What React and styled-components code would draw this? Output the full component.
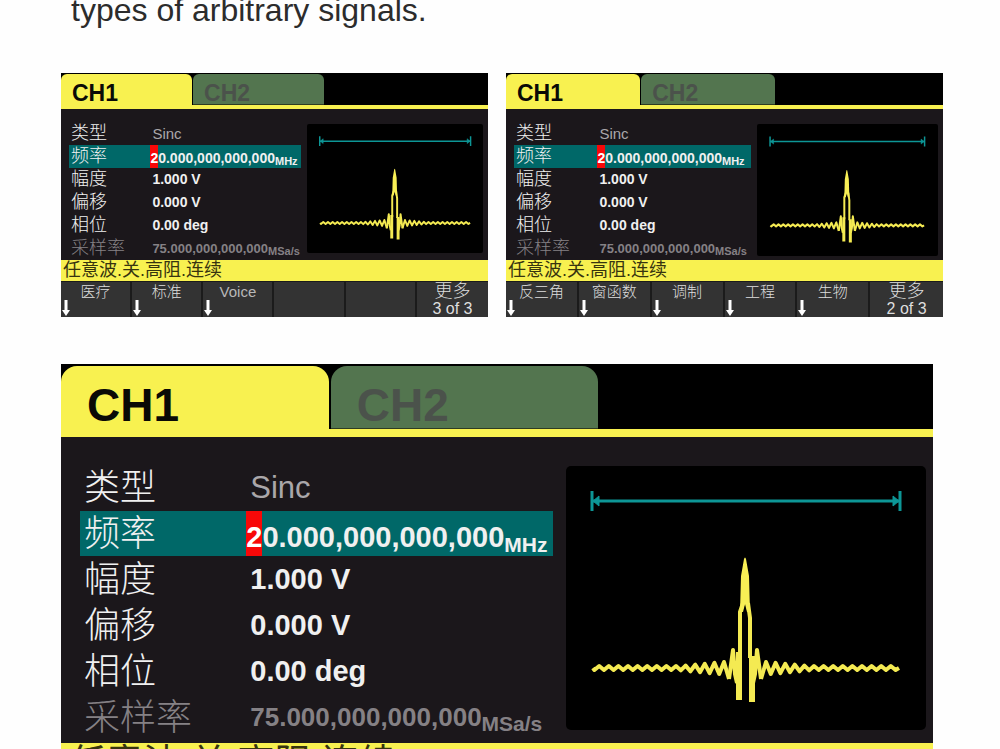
import React from "react";
import styled, { createGlobalStyle, ThemeProvider } from "styled-components";

const GlobalStyle = createGlobalStyle`
  * { box-sizing: border-box; }
  body {
    margin: 0;
    background: #fefefe;
    font-family: "Liberation Sans", "Noto Sans CJK SC", sans-serif;
  }
  button { font-family: inherit; }
`;

const small = {
  tabHeight: 31, tabRadius: 6, tabPad: 11, tabFont: 23, tabDrop: 8, tabTop: 1, line: 4, tabGap: 1,
  bodyTop: 13, bodySide: 8, bodyEnd: 5, bodyGap: 6, plotTop: 2, plotRadius: 2,
  row: 23, rowGap: 0, rowPad: 2, label: 18, text: 15, value: 14, rate: 13, unit: 11,
  unitDrop: 2, cursor: 2, drop: 2, bodyBottom: 0,
  status: 21, statusPad: 2, statusFont: 18, soft: 36, softFont: 15, more: 18, count: 16, arrow: 8,
};

const large = {
  tabHeight: 63, tabRadius: 16, tabPad: 26, tabFont: 46, tabDrop: 15, tabTop: 2, line: 8, tabGap: 2,
  bodyTop: 28, bodySide: 19, bodyEnd: 7, bodyGap: 13, plotTop: 1, plotRadius: 5,
  row: 45, rowGap: 1, rowPad: 4, label: 36, text: 31, value: 29, rate: 26, unit: 21,
  unitDrop: 5, cursor: 4, drop: 4, bodyBottom: 3,
  status: 42, statusPad: 8, statusFont: 37, soft: 72, softFont: 30, more: 36, count: 32, arrow: 16,
};

const Page = styled.main`
  height: 100vh;
  overflow: hidden;
  padding: 0 57px 0 61px;
`;

const Lead = styled.p`
  margin: -8px 0 45px;
  padding-left: 10px;
  font-size: 32px;
  line-height: 36px;
  color: #2c2c2c;
`;

const Pair = styled.section`
  display: grid;
  grid-template-columns: minmax(0, 427fr) minmax(0, 437fr);
  gap: 18px;
  margin-bottom: 47px;
`;

const Single = styled.section`
  padding-right: 10px;
`;

const Frame = styled.article`
  display: flex;
  flex-direction: column;
  background: #1b171b;
  color: #f2f2f2;
  overflow: hidden;
`;

const Tabs = styled.nav`
  display: flex;
  gap: ${(p) => p.theme.tabGap}px;
  padding-top: ${(p) => p.theme.tabTop}px;
  background: #000;
  border-bottom: ${(p) => p.theme.line}px solid #f8f150;
`;

const Tab = styled.button`
  flex: 0 0 30.7%;
  height: ${(p) => p.theme.tabHeight}px;
  padding: ${(p) => p.theme.tabDrop}px 0 0 ${(p) => p.theme.tabPad}px;
  border: 0;
  border-bottom: 1px solid ${(p) => (p.$active ? "#f8f150" : "#2e3c22")};
  border-radius: ${(p) => p.theme.tabRadius}px ${(p) => p.theme.tabRadius}px 0 0;
  background: ${(p) => (p.$active ? "#f8f150" : "#53754f")};
  color: ${(p) => (p.$active ? "#0a0a06" : "#4b524b")};
  font-size: ${(p) => p.theme.tabFont}px;
  font-weight: 700;
  line-height: 1;
  text-align: left;
`;

const Body = styled.div`
  display: grid;
  grid-template-columns: minmax(0, 473fr) minmax(0, 360fr);
  gap: ${(p) => p.theme.bodyGap}px;
  align-items: start;
  padding: ${(p) => p.theme.bodyTop}px ${(p) => p.theme.bodyEnd}px ${(p) => p.theme.bodyBottom}px
    ${(p) => p.theme.bodySide}px;
`;

const Params = styled.dl`
  display: grid;
  gap: ${(p) => p.theme.rowGap}px;
  margin: 0;
`;

const Row = styled.div`
  display: grid;
  grid-template-columns: 36% minmax(0, 1fr);
  height: ${(p) => p.theme.row}px;
  background: ${(p) => (p.$selected ? "#006868" : "transparent")};
  color: ${(p) => (p.$dim ? "#858185" : "#f0f0f0")};
  white-space: nowrap;
`;

const Name = styled.dt`
  padding-left: ${(p) => p.theme.rowPad}px;
  font-size: ${(p) => p.theme.label}px;
  font-weight: 300;
  line-height: ${(p) => p.theme.row}px;
`;

const Value = styled.dd`
  height: ${(p) => p.theme.row}px;
  margin: 0;
  font-size: ${(p) => p.theme.value}px;
  font-weight: 700;
  line-height: ${(p) => p.theme.row}px;
`;

const EditValue = styled(Value)`
  display: flex;
  margin-left: -${(p) => p.theme.cursor}px;
`;

const RateValue = styled(Value)`
  font-size: ${(p) => p.theme.rate}px;
`;

const PlainValue = styled(Value)`
  font-size: ${(p) => p.theme.text}px;
  font-weight: 400;
  color: #aaa7aa;
`;

const Cursor = styled.mark`
  height: 100%;
  padding-top: ${(p) => p.theme.drop}px;
  background: #f80808;
  color: #fff;
`;

const Digits = styled.span`
  padding-top: ${(p) => p.theme.drop}px;
`;

const Unit = styled.small`
  position: relative;
  top: ${(p) => p.theme.unitDrop}px;
  font-size: ${(p) => p.theme.unit}px;
  line-height: 0;
`;

const Plot = styled.svg`
  display: block;
  width: 100%;
  height: auto;
  margin-top: ${(p) => p.theme.plotTop}px;
  border-radius: ${(p) => p.theme.plotRadius}px;
  background: #000;
`;

const Status = styled.p`
  margin: 0;
  padding-left: ${(p) => p.theme.statusPad}px;
  background: #f8f150;
  color: #37340f;
  font-size: ${(p) => p.theme.statusFont}px;
  line-height: ${(p) => p.theme.status}px;
  white-space: nowrap;
`;

const SoftKeys = styled.div`
  display: grid;
  grid-template-columns: repeat(6, minmax(0, 1fr));
  height: ${(p) => p.theme.soft}px;
  border-bottom: 1px solid #111;
`;

const SoftKey = styled.button`
  display: grid;
  grid-template-rows: 1fr 1fr;
  justify-items: center;
  align-items: center;
  padding: 0;
  border: 0;
  border-top: 1px solid #1b1b1b;
  border-right: 2px solid #1b1b1b;
  background: #333;
  color: #dedede;
  font-size: ${(p) => (p.$more ? p.theme.more : p.theme.softFont)}px;
  font-weight: 300;
  line-height: 1;
  white-space: nowrap;
  &:last-child { border-right: 0; }
`;

const Count = styled.span`
  font-size: ${(p) => p.theme.count}px;
`;

const KeyText = styled.span`
  grid-area: 1 / 1;
`;

const Latin = styled(KeyText)`
  color: #b8b8b8;
`;

const Arrow = styled.svg`
  grid-area: 1 / 1 / 3 / 2;
  justify-self: start;
  align-self: end;
  width: ${(p) => p.theme.arrow}px;
  margin: 0 0 2px 1px;
`;

function ripple(from, step, count) {
  const points = [];
  for (let i = 0; i < count; i += 1) {
    const x = from + step * i;
    const amp = Math.max(2, 6 - i * 0.9);
    points.push(`L${x} ${202 - amp}`, `L${x + step / 2} ${202 + amp}`);
  }
  return points.join(" ");
}

function Waveform() {
  return (
    <Plot viewBox="0 0 360 264" role="img" aria-label="Sinc">
      <g stroke="#0d9696" fill="#0d9696" strokeWidth="3">
        <path d="M26 35H334M26 25V45M334 25V45" />
        <path d="M27 35L33 30V40ZM333 35L327 30V40Z" strokeWidth="1" />
      </g>
      <g fill="none" stroke="#f4ea52" strokeWidth="4" strokeLinejoin="round">
        <path d={`M163 213 ${ripple(158, -9.6, 14)} L27 202`} />
        <path d={`M195 213 ${ripple(200, 9.6, 14)} L333 202`} />
        <path d="M163 213L167 184L169 208L171 217M187 217L189 208L191 184L195 213" />
        <path d="M173 234V186M186 236V190" strokeWidth="6" />
        <path d="M174 190V146L177 137M184 192V152L182 137" strokeWidth="4" />
      </g>
      <path d="M178 93Q179 90 180 93L183 110L184 146H181L179 138L177 146H174L175 110Z" fill="#f8ef55" />
    </Plot>
  );
}

function DownArrow() {
  return (
    <Arrow viewBox="0 0 8 16" aria-hidden="true">
      <path d="M2.5 0H5.5V10H8L4 16L0 10H2.5Z" fill="#fff" />
    </Arrow>
  );
}

function Screen({ size, keys, page }) {
  return (
    <ThemeProvider theme={size}>
      <Frame>
        <Tabs>
          <Tab type="button" $active>CH1</Tab>
          <Tab type="button">CH2</Tab>
        </Tabs>
        <Body>
          <Params>
            <Row><Name>类型</Name><PlainValue>Sinc</PlainValue></Row>
            <Row $selected>
              <Name>频率</Name>
              <EditValue>
                <Cursor>2</Cursor>
                <Digits>0.000,000,000,000<Unit>MHz</Unit></Digits>
              </EditValue>
            </Row>
            <Row><Name>幅度</Name><Value>1.000 V</Value></Row>
            <Row><Name>偏移</Name><Value>0.000 V</Value></Row>
            <Row><Name>相位</Name><Value>0.00 deg</Value></Row>
            <Row $dim>
              <Name>采样率</Name>
              <RateValue>75.000,000,000,000<Unit>MSa/s</Unit></RateValue>
            </Row>
          </Params>
          <Waveform />
        </Body>
        <Status>任意波.关.高阻.连续</Status>
        <SoftKeys>
          {keys.map((key, i) => (
            <SoftKey type="button" key={i} aria-label={key || "–"}>
              {key && (key === "Voice" ? <Latin>{key}</Latin> : <KeyText>{key}</KeyText>)}
              {key && <DownArrow />}
            </SoftKey>
          ))}
          <SoftKey type="button" $more>
            <span>更多</span>
            <Count>{page} of 3</Count>
          </SoftKey>
        </SoftKeys>
      </Frame>
    </ThemeProvider>
  );
}

export default function App() {
  return (
    <>
      <GlobalStyle />
      <Page>
        <Lead>types of arbitrary signals.</Lead>
        <Pair>
          <Screen size={small} page={3} keys={["医疗", "标准", "Voice", "", ""]} />
          <Screen size={small} page={2} keys={["反三角", "窗函数", "调制", "工程", "生物"]} />
        </Pair>
        <Single>
          <Screen size={large} page={1} keys={["常用", "数学", "三角", "工程", "生物"]} />
        </Single>
      </Page>
    </>
  );
}
